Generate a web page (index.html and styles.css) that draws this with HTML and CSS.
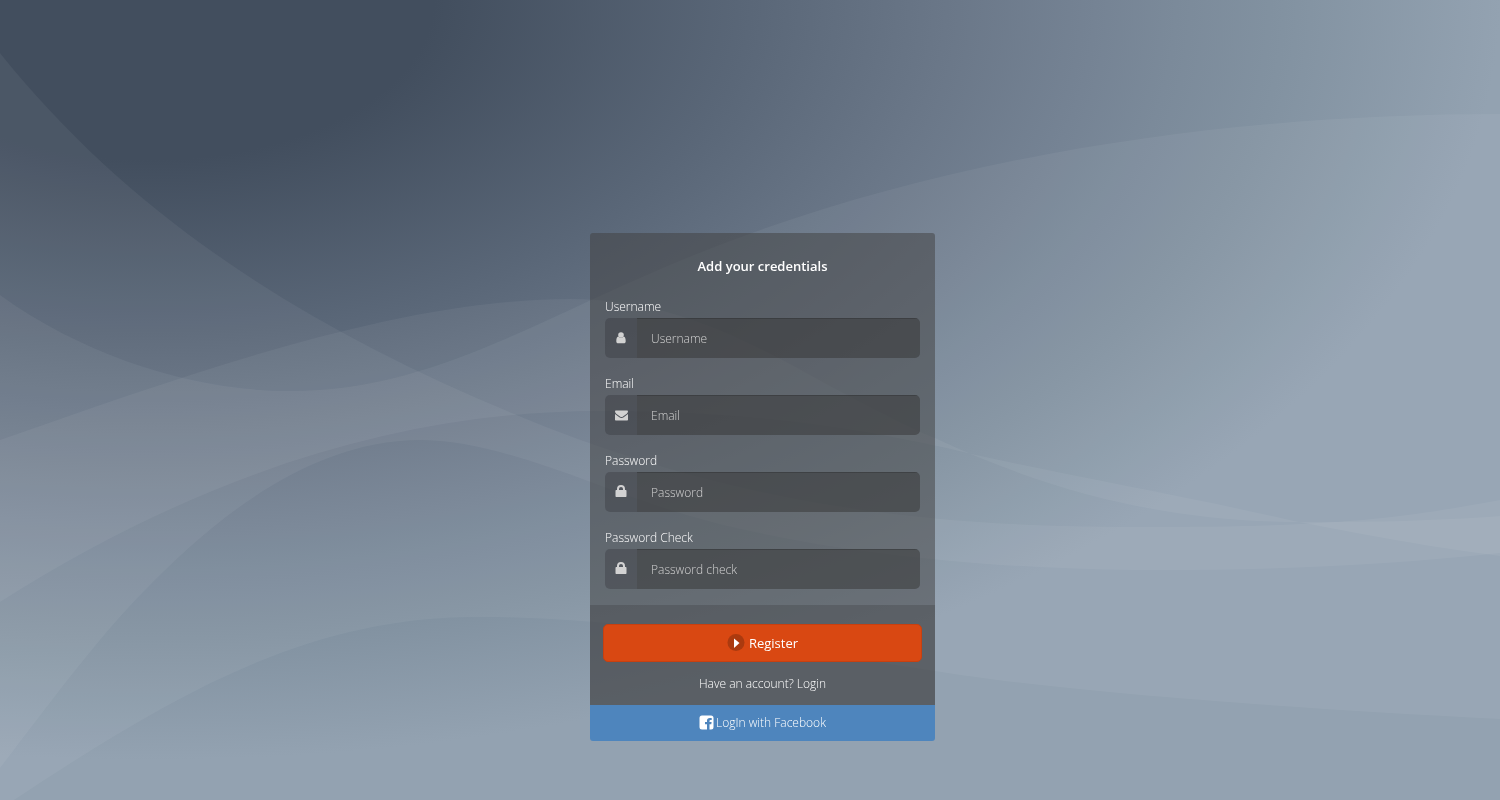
FILE: index.html
```html
<!DOCTYPE html>
<html lang="en">
<head>
<meta charset="utf-8">
<meta name="viewport" content="width=device-width, initial-scale=1">
<title>Register</title>
<link rel="stylesheet" href="styles.css">
</head>
<body>
<svg class="backdrop" viewBox="0 0 1500 800" preserveAspectRatio="none" aria-hidden="true">
  <defs>
    <radialGradient id="sky" gradientUnits="userSpaceOnUse" cx="0" cy="0" r="1" gradientTransform="translate(150 0) scale(1350 760)">
      <stop offset="0.21" stop-color="#424e5e"/>
      <stop offset="0.445" stop-color="#5a6778"/>
      <stop offset="0.59" stop-color="#6a7788"/>
      <stop offset="0.7" stop-color="#758394"/>
      <stop offset="0.76" stop-color="#7b8a9a"/>
      <stop offset="0.84" stop-color="#8292a1"/>
      <stop offset="1" stop-color="#93a2b1"/>
    </radialGradient>
  </defs>
  <rect width="1500" height="800" fill="url(#sky)"/>
  <g class="waves">
    <path d="M0 295C90 360 200 391 290 391C420 391 520 330 640 278C880 170 1180 114 1500 114V719C1250 706 1050 690 935 671C780 648 640 617 478 617C310 617 180 690 14 800H0Z"/>
    <path d="M0 53C130 215 300 325 514 414S920 527 1133 527S1400 518 1500 500V553C1380 566 1260 571 1133 570C950 568 780 545 670 510C588 484 500 441 421 440C300 440 200 535 150 585C95 640 45 710 0 768Z"/>
    <path fill-rule="evenodd" d="M0 440C200 370 400 299 570 299C680 299 760 348 830 386C880 412 905 426 935 438C1060 497 1180 523 1308 522C1375 522 1430 521 1500 516V556C1430 547 1370 536 1294 521C1180 495 1080 478 976 455C850 425 740 411 600 411C400 411 200 475 0 602Z"/>
  </g>
</svg>

<main class="page">
  <form class="panel">
    <div class="panel-body">
      <h1 class="title">Add your credentials</h1>
      <div class="fields">
        <div class="field">
          <label for="username">Username</label>
          <div class="control">
            <span class="addon"><svg width="10" height="12" viewBox="0 0 10 12" aria-hidden="true"><circle cx="5" cy="3" r="2.8"/><path d="M2.300 4.600C.8 5 .3 6.800 .3 9.200C.3 10.500 1 11.300 2.200 11.300H7.800C9 11.300 9.700 10.500 9.700 9.200C9.700 6.800 9.200 5 7.700 4.600C6.200 6.200 3.800 6.200 2.300 4.600Z"/></svg></span>
            <input id="username" type="text" placeholder="Username">
          </div>
        </div>
        <div class="field">
          <label for="email">Email</label>
          <div class="control">
            <span class="addon"><svg width="13" height="11" viewBox="0 0 13 11" aria-hidden="true"><path d="M.8 .5H12.200Q13 .5 13 1.300Q13 2.700 11.800 3.700L8 6.400Q6.500 7.500 5 6.400L1.200 3.700Q0 2.700 0 1.300Q0 .5 .8 .5ZM0 4L4.300 7.200Q6.500 8.600 8.700 7.200L13 4V9.700Q13 10.500 12.200 10.500H.8Q0 10.500 0 9.700Z"/></svg></span>
            <input id="email" type="email" placeholder="Email">
          </div>
        </div>
        <div class="field">
          <label for="password">Password</label>
          <div class="control">
            <span class="addon"><svg width="12" height="14" viewBox="0 0 12 14" aria-hidden="true"><path fill-rule="evenodd" d="M2 5V4A4 4 0 0 1 10 4V5H10.700Q11.500 5 11.500 5.800V11.200Q11.500 12 10.700 12H1.300Q.5 12 .5 11.200V5.800Q.5 5 1.300 5ZM4 5H8V4A2 2 0 0 0 4 4Z"/></svg></span>
            <input id="password" type="password" placeholder="Password">
          </div>
        </div>
        <div class="field">
          <label for="password-check">Password Check</label>
          <div class="control">
            <span class="addon"><svg width="12" height="14" viewBox="0 0 12 14" aria-hidden="true"><path fill-rule="evenodd" d="M2 5V4A4 4 0 0 1 10 4V5H10.700Q11.500 5 11.500 5.800V11.200Q11.500 12 10.700 12H1.300Q.5 12 .5 11.200V5.800Q.5 5 1.300 5ZM4 5H8V4A2 2 0 0 0 4 4Z"/></svg></span>
            <input id="password-check" type="password" placeholder="Password check">
          </div>
        </div>
      </div>
    </div>
    <div class="panel-footer">
      <button class="register" type="submit">
        <svg width="18" height="18" viewBox="0 0 18 18" aria-hidden="true"><circle cx="9" cy="8.500" r="8.500" fill="#ab3a0f"/><path d="M7 4.500L12.500 9L7 14Z" fill="#fff"/></svg>
        <span>Register</span>
      </button>
      <a class="login" href="#login">Have an account? Login</a>
    </div>
    <a class="facebook" href="#facebook">
      <svg width="15" height="16" viewBox="0 0 15 16" aria-hidden="true"><path fill-rule="evenodd" d="M3 .5H12Q14.500 .5 14.500 3V12Q14.500 14.500 12 14.500H10.500V9.300H12.300L12.600 7.100H10.500V5.900Q10.500 5 11.500 5H12.700V2.900H10.900Q8 2.900 8 5.600V7.100H6V9.300H8V14.500H3Q.5 14.500 .5 12V3Q.5 .5 3 .5Z" fill="#fff"/></svg>
      <span>LogIn with Facebook</span>
    </a>
  </form>
</main>
</body>
</html>
```
FILE: styles.css
```css
* {
  box-sizing: border-box;
}

body {
  margin: 0;
  min-height: 100vh;
  background: #92a2b1;
  color: #fff;
  font-family: "Open Sans", sans-serif;
  font-size: 12px;
  font-weight: 300;
  line-height: 18px;
}

.backdrop {
  position: fixed;
  inset: 0;
  z-index: -1;
  width: 100%;
  height: 100%;
}

.waves {
  fill: #fff;
  fill-opacity: 0.05;
}

.page {
  display: flex;
  justify-content: center;
  padding: 233px 0 40px 25px;
}

.panel {
  width: 100%;
  max-width: 345px;
  overflow: hidden;
  border-radius: 3px;
}

.panel-body {
  padding: 23px 15px 16px;
  background: rgba(66, 66, 66, 0.52);
}

.title {
  margin: 0 0 22px;
  font-size: 13px;
  font-weight: 600;
  line-height: 20px;
  text-align: center;
}

.fields {
  display: grid;
  gap: 17px;
}

.field {
  display: grid;
  gap: 2px;
}

.control {
  display: flex;
  height: 40px;
  overflow: hidden;
  border-radius: 5px;
}

.addon {
  display: flex;
  align-items: center;
  justify-content: center;
  width: 32px;
  background: rgba(48, 48, 54, 0.33);
}

.addon svg {
  fill: #d2d2d2;
}

.control input {
  flex: 1;
  min-width: 0;
  padding: 0 14px;
  border: 0;
  border-top: 1px solid rgba(40, 40, 40, 0.6);
  background: rgba(51, 51, 51, 0.5);
  background-clip: padding-box;
  color: #fff;
  font: inherit;
}

.control input::placeholder {
  color: #d2d2d2;
  opacity: 1;
}

.panel-footer {
  display: grid;
  gap: 12px;
  padding: 19px 13px 11px;
  background: rgba(60, 60, 62, 0.66);
}

.register {
  display: flex;
  align-items: center;
  justify-content: center;
  gap: 4px;
  height: 38px;
  padding: 0;
  border: 1px solid #c84010;
  border-radius: 5px;
  background: #d94812;
  color: #fff;
  font: inherit;
  font-size: 13px;
  font-weight: 400;
  cursor: pointer;
}

.login {
  color: #fff;
  line-height: 20px;
  text-align: center;
  text-decoration: none;
}

.facebook {
  display: flex;
  align-items: center;
  justify-content: center;
  gap: 2px;
  height: 36px;
  background: #4e85bd;
  color: #fff;
  text-decoration: none;
}
```
